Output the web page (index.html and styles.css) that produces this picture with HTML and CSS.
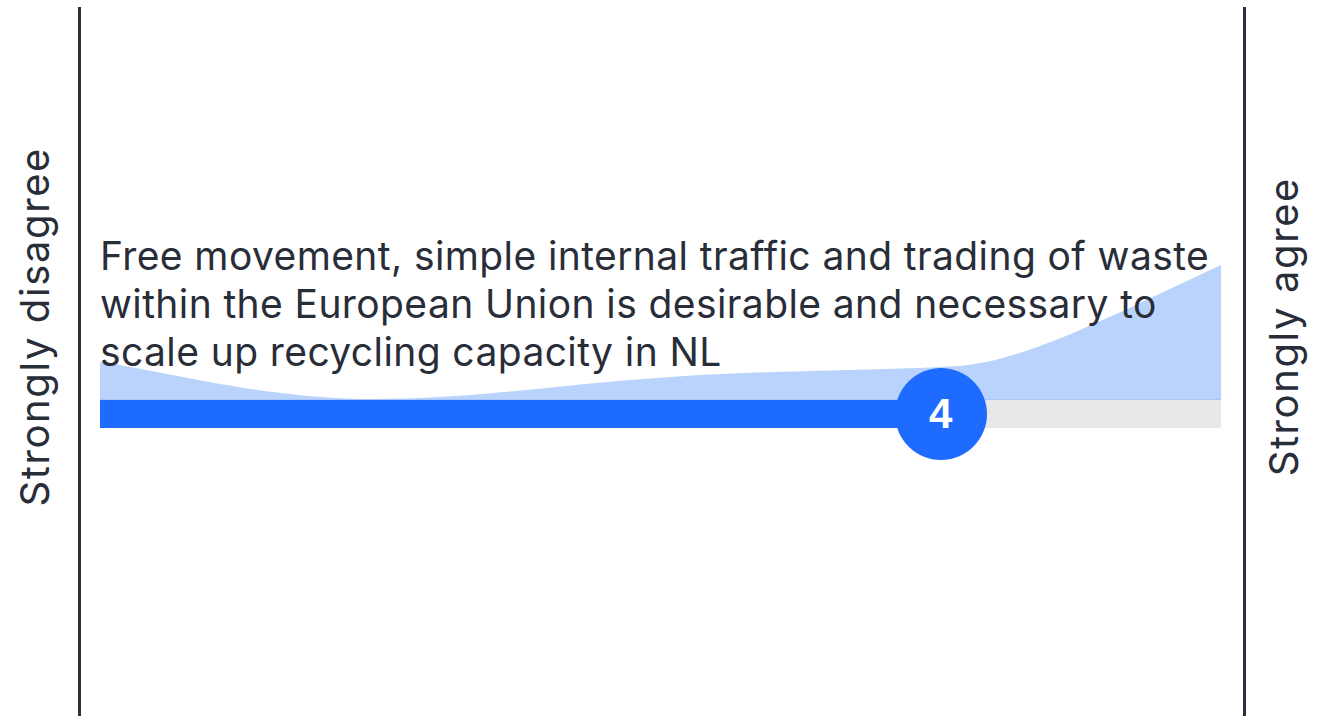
FILE: index.html
```html
<!DOCTYPE html>
<html lang="en">
<head>
<meta charset="utf-8">
<title>Statement rating</title>
<link rel="stylesheet" href="styles.css">
</head>
<body>
<main class="scale">
  <div class="side side-left"><span class="side-label">Strongly disagree</span></div>
  <section class="panel">
    <p class="statement">Free movement, simple internal traffic and trading of waste within the European Union is desirable and necessary to scale up recycling capacity in NL</p>
    <div class="slider">
      <svg class="distribution" viewBox="0 0 1122 140" preserveAspectRatio="none" aria-hidden="true">
        <path d="M0,102 C60,110 150,136 260,139 C380,140 450,124 600,115 C700,110 800,110 860,106 C930,100 1020,52 1122,5 L1122,140 L0,140 Z" fill="#bad3fd"/>
        <line x1="0" y1="139.5" x2="1122" y2="139.5" stroke="#a9c6fb" stroke-width="1"/>
      </svg>
      <div class="track">
        <div class="track-fill" style="width: 75%"></div>
      </div>
      <div class="thumb" style="left: 75%">4</div>
    </div>
  </section>
  <div class="side side-right"><span class="side-label">Strongly agree</span></div>
</main>
</body>
</html>
```
FILE: styles.css
```css
html, body {
  margin: 0;
  padding: 0;
  background: #ffffff;
}

body {
  font-family: "Inter", "Noto Sans", sans-serif;
  color: #282d38;
}

.scale {
  display: flex;
  height: 709px;
  margin-top: 7px;
}

.side {
  display: flex;
  align-items: center;
  justify-content: center;
  padding-bottom: 69px;
  box-sizing: border-box;
}

.side-left {
  width: 78px;
  padding-right: 8px;
}

.side-right {
  width: 71px;
  padding-left: 4px;
}

.side-label {
  writing-mode: vertical-rl;
  transform: rotate(180deg);
  font-size: 40px;
  line-height: 42px;
  white-space: nowrap;
  letter-spacing: 1.6px;
}

.panel {
  flex: 1;
  border-left: 3px solid #2b303b;
  border-right: 3px solid #2b303b;
  padding: 225px 22px 0 19px;
  display: flex;
  flex-direction: column;
}

.statement {
  position: relative;
  z-index: 2;
  margin: 0;
  font-size: 39px;
  line-height: 48px;
  letter-spacing: 0.4px;
}

.slider {
  position: relative;
  margin-top: 24px;
}

.distribution {
  position: absolute;
  left: 0;
  bottom: 100%;
  width: 100%;
  height: 140px;
  display: block;
  z-index: 1;
}

.track {
  height: 28px;
  background: #e8e8e8;
  display: flex;
}

.track-fill {
  background: #1e6cff;
  height: 100%;
}

.thumb {
  position: absolute;
  top: 14px;
  width: 92px;
  height: 92px;
  margin: -46px 0 0 -46px;
  border-radius: 50%;
  background: #1e6cff;
  color: #ffffff;
  display: flex;
  align-items: center;
  justify-content: center;
  font-family: "Liberation Sans", Arial, sans-serif;
  font-weight: bold;
  font-size: 42px;
  z-index: 3;
}
```
